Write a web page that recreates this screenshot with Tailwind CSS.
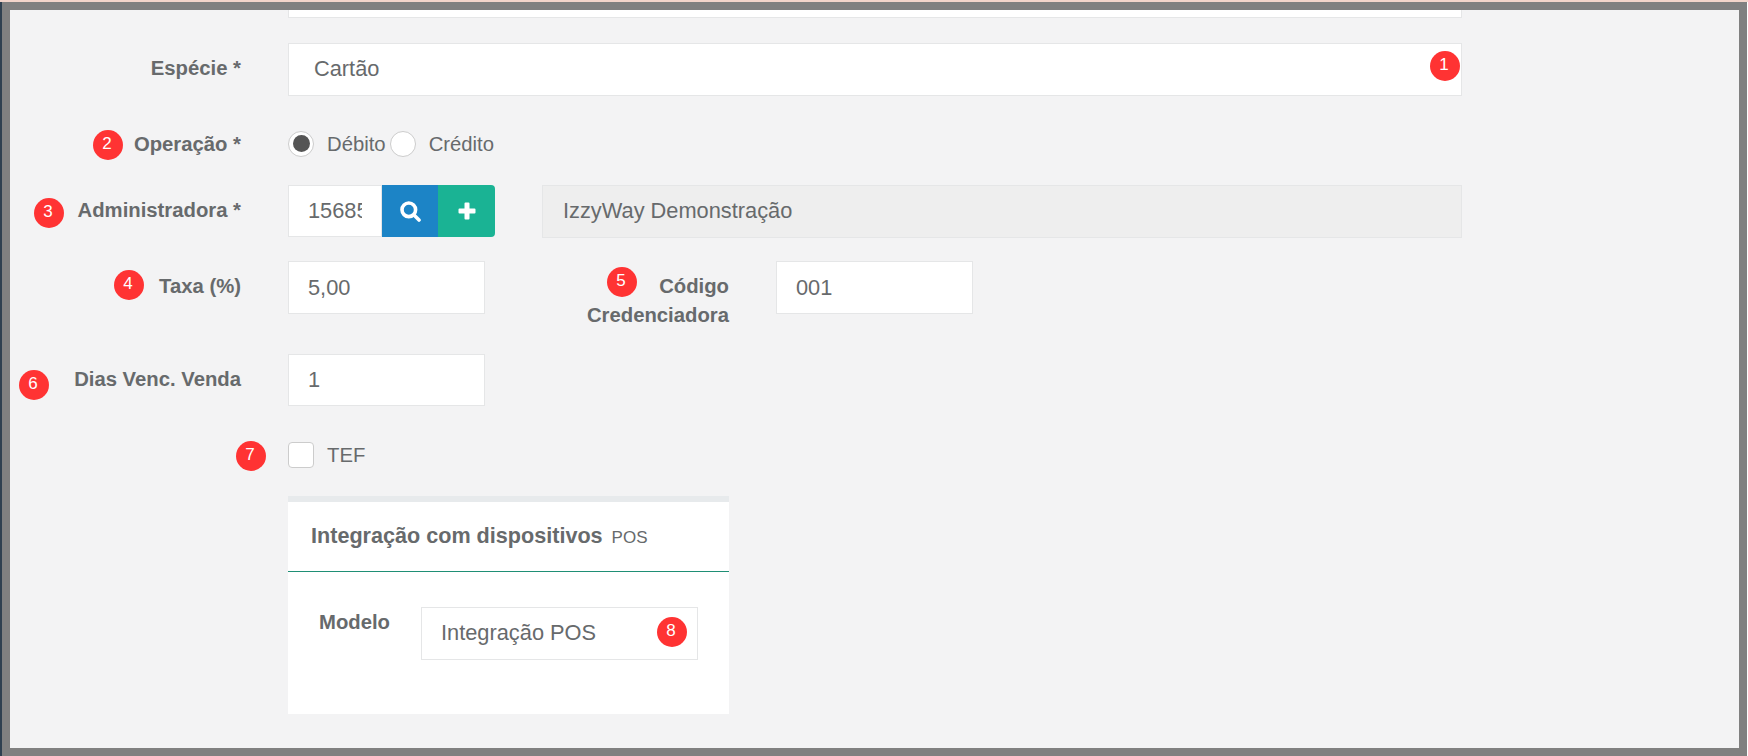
<!DOCTYPE html>
<html lang="pt-BR">

<head>
  <meta charset="UTF-8">
  <title>Cadastro de Espécie</title>
  <script src="https://cdn.jsdelivr.net/npm/@tailwindcss/browser@4"></script>
</head>

<body class="relative h-[756px] w-[1748px] overflow-hidden bg-white font-['Liberation_Sans',Arial,sans-serif] text-[#676a6c]">
  <div class="h-[2px] bg-[#f3d5cb]"></div>
  <div class="flex h-[754px] w-[1747px]">
    <div class="w-[2px] bg-[#2f4050]"></div>
    <main class="flex-1 overflow-hidden border-[8px] border-[#808080] bg-[#f3f3f4]">
      <div class="ml-[278px] h-[8px] w-[1174px] border-x border-b border-[#e5e6e7] bg-white"></div>

      <!-- especie -->
      <div class="mt-[25px] flex">
        <label class="mr-[47px] w-[231px] shrink-0 pt-[11px] text-right text-[20.3px] font-bold leading-[29px]">Espécie *</label>
        <div class="flex h-[53px] w-[1174px] items-center border border-[#e5e6e7] bg-white pl-[25px] text-[21.8px]">Cartão</div>
      </div>

      <!-- operacao -->
      <div class="mt-[34px] flex h-[27px]">
        <label class="mr-[47px] w-[231px] shrink-0 text-right text-[20.3px] font-bold leading-[29px]">Operação *</label>
        <div class="flex h-[27px] items-center text-[20.3px]">
          <span class="flex size-[26px] items-center justify-center rounded-full border border-[#ccc] bg-white"><span class="size-[17px] rounded-full bg-[#555]"></span></span>
          <span class="ml-[13px] mr-[4px] pt-[2px]">Débito</span>
          <span class="size-[26px] rounded-full border border-[#ccc] bg-white"></span>
          <span class="ml-[13px] pt-[2px]">Crédito</span>
        </div>
      </div>

      <!-- administradora -->
      <div class="mt-[28px] flex">
        <label class="mr-[47px] w-[231px] shrink-0 pt-[11px] text-right text-[20.3px] font-bold leading-[29px]">Administradora *</label>
        <div class="flex h-[52px]">
          <input type="text" value="156858" class="h-full w-[94px] border border-[#e5e6e7] bg-white px-[19px] text-[21.8px] text-[#676a6c]">
          <button class="flex w-[56px] items-center justify-center bg-[#1c84c6]">
            <svg width="21" height="21" viewBox="0 0 21 21" fill="none" stroke="#fff" stroke-linecap="round">
              <circle cx="8.8" cy="8.8" r="6.8" stroke-width="3.6" />
              <path d="M14 14l5 5" stroke-width="3.6" />
            </svg>
          </button>
          <button class="flex w-[57px] items-center justify-center rounded-r-[4px] bg-[#1ab394]">
            <svg width="18" height="18" viewBox="0 0 18 18" fill="#fff">
              <path d="M6.5 1.5a1 1 0 0 1 1-1h3a1 1 0 0 1 1 1v5h5a1 1 0 0 1 1 1v3a1 1 0 0 1-1 1h-5v5a1 1 0 0 1-1 1h-3a1 1 0 0 1-1-1v-5h-5a1 1 0 0 1-1-1v-3a1 1 0 0 1 1-1h5z" />
            </svg>
          </button>
        </div>
        <div class="ml-[47px] flex h-[53px] w-[920px] items-center border border-[#e5e6e7] bg-[#eeeeee] pl-[20px] text-[21.8px]">IzzyWay Demonstração</div>
      </div>

      <!-- taxa / codigo -->
      <div class="mt-[23px] flex h-[53px]">
        <label class="mr-[47px] w-[231px] shrink-0 pt-[11px] text-right text-[20.3px] font-bold leading-[29px]">Taxa (%)</label>
        <input type="text" value="5,00" class="h-[53px] w-[197px] border border-[#e5e6e7] bg-white px-[19px] text-[21.8px] text-[#676a6c]">
        <label class="ml-[84px] mr-[47px] w-[160px] shrink-0 pt-[11px] text-right text-[20.3px] font-bold leading-[29px]">Código Credenciadora</label>
        <input type="text" value="001" class="h-[53px] w-[197px] border border-[#e5e6e7] bg-white px-[19px] text-[21.8px] text-[#676a6c]">
      </div>

      <!-- dias venc -->
      <div class="mt-[40px] flex">
        <label class="mr-[47px] w-[231px] shrink-0 pt-[11px] text-right text-[20.3px] font-bold leading-[29px]">Dias Venc. Venda</label>
        <input type="text" value="1" class="h-[52px] w-[197px] border border-[#e5e6e7] bg-white px-[19px] text-[21.8px] text-[#676a6c]">
      </div>

      <!-- tef -->
      <div class="ml-[278px] mt-[36px] flex h-[26px] items-center text-[20.3px]">
        <span class="size-[26px] rounded-[4px] border border-[#ccc] bg-white"></span>
        <span class="ml-[13px] pt-[1px]">TEF</span>
      </div>

      <!-- integracao pos -->
      <section class="ml-[278px] mt-[28px] h-[218px] w-[441px] border-t-[6px] border-[#e7eaec] bg-white">
        <div class="flex h-[70px] items-center border-b border-[#1f8f75] pl-[23px] text-[21.6px] font-bold">
          <h5>Integração com dispositivos <small class="ml-[3px] text-[17px] font-normal">POS</small></h5>
        </div>
        <div class="flex pl-[31px] pt-[35px]">
          <label class="w-[102px] shrink-0 pt-[1px] text-[20.3px] font-bold leading-[29px]">Modelo</label>
          <div class="flex h-[53px] w-[277px] items-center border border-[#e5e6e7] pl-[19px] text-[21.8px]">Integração POS</div>
        </div>
      </section>
    </main>
  </div>

  <!-- marcadores numerados -->
  <span class="absolute left-[1430px] top-[51px] flex size-[30px] items-center justify-center rounded-full bg-[#ff3333] pb-[2px] pr-[2px] text-[17px] text-white">1</span>
  <span class="absolute left-[93px] top-[130px] flex size-[30px] items-center justify-center rounded-full bg-[#ff3333] pb-[2px] pr-[2px] text-[17px] text-white">2</span>
  <span class="absolute left-[34px] top-[198px] flex size-[30px] items-center justify-center rounded-full bg-[#ff3333] pb-[2px] pr-[2px] text-[17px] text-white">3</span>
  <span class="absolute left-[114px] top-[270px] flex size-[30px] items-center justify-center rounded-full bg-[#ff3333] pb-[2px] pr-[2px] text-[17px] text-white">4</span>
  <span class="absolute left-[607px] top-[267px] flex size-[30px] items-center justify-center rounded-full bg-[#ff3333] pb-[2px] pr-[2px] text-[17px] text-white">5</span>
  <span class="absolute left-[19px] top-[370px] flex size-[30px] items-center justify-center rounded-full bg-[#ff3333] pb-[2px] pr-[2px] text-[17px] text-white">6</span>
  <span class="absolute left-[236px] top-[441px] flex size-[30px] items-center justify-center rounded-full bg-[#ff3333] pb-[2px] pr-[2px] text-[17px] text-white">7</span>
  <span class="absolute left-[657px] top-[617px] flex size-[30px] items-center justify-center rounded-full bg-[#ff3333] pb-[2px] pr-[2px] text-[17px] text-white">8</span>
</body>

</html>
